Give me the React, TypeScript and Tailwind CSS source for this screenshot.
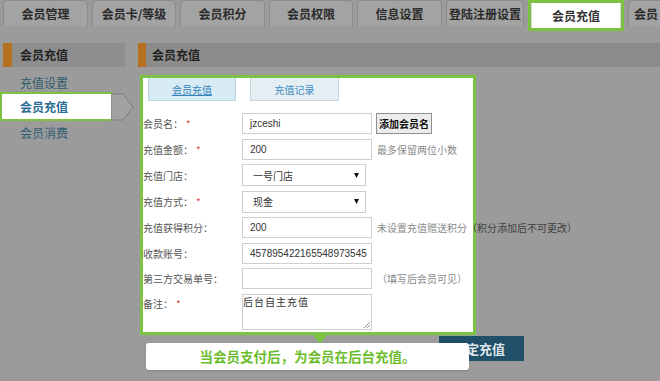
import React from "react";

const cjk = "font-['Noto_Sans_CJK_SC','Noto_Sans',sans-serif]";

function Tab({ label, w }: { label: string; w: string }) {
  return (
    <div
      className={`${w} h-[26px] shrink-0 rounded-t-[4px] border border-b-0 border-[#8c8c8c] bg-[#a3a3a3] flex items-center justify-center text-[12px] font-bold text-[#2a2a2a]`}
    >
      {label}
    </div>
  );
}

function Label({ text, req }: { text: string; req?: boolean }) {
  return (
    <div className="w-[99px] shrink-0 text-[10px] text-[#555] whitespace-nowrap">
      {text}
      {req && <span className="ml-[3px] text-[#e0463f]">*</span>}
    </div>
  );
}

function Input({ value, w = "w-[130px]" }: { value?: string; w?: string }) {
  return (
    <div
      className={`${w} h-[21px] shrink-0 border border-[#cfcfcf] bg-white pl-[7px] flex items-center text-[10px] text-[#333] font-['Liberation_Sans',sans-serif]`}
    >
      {value}
    </div>
  );
}

function Select({ value }: { value: string }) {
  return (
    <div className="w-[124px] h-[22px] shrink-0 border border-[#cfcfcf] bg-white pl-[10px] pr-[6px] flex items-center justify-between text-[10px] text-[#333]">
      <span>{value}</span>
      <svg width="5" height="5" viewBox="0 0 5 5">
        <polygon points="0,0 5,0 2.5,5" fill="#111" />
      </svg>
    </div>
  );
}

export default function App() {
  return (
    <div className={`relative w-[660px] h-[381px] overflow-hidden bg-[#9b9b9b] ${cjk}`}>
      {/* top tabs */}
      <div className="flex items-start h-[31px] pl-[3px] gap-[4px]">
        <Tab label="会员管理" w="w-[85px]" />
        <Tab label="会员卡/等级" w="w-[84px]" />
        <Tab label="会员积分" w="w-[85px]" />
        <Tab label="会员权限" w="w-[84px]" />
        <Tab label="信息设置" w="w-[85px]" />
        <Tab label="登陆注册设置" w="w-[78px]" />
        <div className="w-[96px] h-[31px] shrink-0 border-[3px] border-[#7dc243] bg-white flex items-center justify-center text-[12px] font-bold text-[#333]">
          <div className="w-full h-full border-x border-[#d8d8d8] flex items-center justify-center">会员充值</div>
        </div>
        <div className="w-[33px] h-[26px] shrink-0 rounded-tl-[4px] border border-b-0 border-r-0 border-[#8c8c8c] bg-[#a3a3a3] flex items-center pl-[5px] text-[12px] font-bold text-[#2a2a2a] whitespace-nowrap">
          会员
        </div>
      </div>

      {/* body */}
      <div className="flex mt-[12px]">
        {/* sidebar */}
        <div className="w-[138px] shrink-0">
          <div className="flex h-[24px] pl-[3px]">
            <div className="w-[9px] bg-[#b5711d]" />
            <div className="w-[113px] bg-[#8e8e8e] flex items-center pl-[8px] text-[12px] font-bold text-[#222]">
              会员充值
            </div>
          </div>
          <div className="mt-[6px] h-[19px] flex items-center pl-[20px] text-[12px] text-[#2f5e6f]">
            充值设置
          </div>
          <div className="relative h-[29px]">
            <div className="w-[113px] h-[29px] border-2 border-[#7dc243] bg-white flex items-center pl-[18px] text-[12px] font-bold text-[#2b6d95]">
              会员充值
            </div>
            <svg className="absolute left-[111px] top-[1px]" width="24" height="28" viewBox="0 0 24 28">
              <polygon points="0,1 12,1 22,14 12,27 0,27" fill="#a2a2a2" stroke="#7f7f7f" strokeWidth="1" />
            </svg>
          </div>
          <div className="h-[24px] flex items-center pl-[20px] text-[12px] text-[#2f5e6f]">会员消费</div>
        </div>

        {/* main */}
        <div className="flex-1 min-w-0">
          <div className="flex h-[24px]">
            <div className="w-[8px] bg-[#b5711d]" />
            <div className="flex-1 bg-[#8c8c8c] flex items-center pl-[6px] text-[12px] font-bold text-[#222]">
              会员充值
            </div>
          </div>

          <div className="relative mt-[8px] ml-[2px] w-[336px] h-[260px] border-[3px] border-[#7dc243] bg-white">
            {/* panel tabs */}
            <div className="flex pl-[5px] gap-[14px]">
              <div className="w-[88px] h-[23px] bg-[#d6ebf4] border border-t-0 border-[#b9d3df] flex items-center justify-center text-[10px] text-[#3683ba] underline">
                会员充值
              </div>
              <div className="w-[89px] h-[23px] bg-[#e4eef3] border border-t-0 border-[#c5d6de] flex items-center justify-center text-[10px] text-[#3f8cc0]">
                充值记录
              </div>
            </div>

            {/* form */}
            <div className="mt-[12px] flex flex-col gap-[4.5px]">
              <div className="flex items-center">
                <Label text="会员名：" req />
                <Input value="jzceshi" />
                <div className="ml-[4px] h-[21px] px-[2px] border border-[#8f8f8f] bg-[#ececec] flex items-center text-[10px] font-bold text-[#111] whitespace-nowrap">
                  添加会员名
                </div>
              </div>
              <div className="flex items-center">
                <Label text="充值金额：" req />
                <Input value="200" />
                <span className="ml-[5px] text-[10px] text-[#8a8a8a] whitespace-nowrap">最多保留两位小数</span>
              </div>
              <div className="flex items-center">
                <Label text="充值门店：" />
                <Select value="一号门店" />
              </div>
              <div className="flex items-center">
                <Label text="充值方式：" req />
                <Select value="现金" />
              </div>
              <div className="flex items-center">
                <Label text="充值获得积分：" />
                <Input value="200" />
                <span className="ml-[5px] text-[10px] whitespace-nowrap">
                  <span className="text-[#8a8a8a]">未设置充值赠送积分</span>
                  <span className="text-[#3f3f3f]">（积分添加后不可更改）</span>
                </span>
              </div>
              <div className="flex items-center">
                <Label text="收款账号：" />
                <Input value="457895422165548973545" />
              </div>
              <div className="flex items-center">
                <Label text="第三方交易单号：" />
                <Input />
                <span className="ml-[5px] text-[10px] text-[#8a8a8a] whitespace-nowrap">（填写后会员可见）</span>
              </div>
              <div className="flex items-start">
                <div className="pt-[2px]">
                  <Label text="备注：" req />
                </div>
                <div className="relative w-[130px] h-[36px] border border-[#cfcfcf] bg-white text-[10px] tracking-[1px] text-[#333] leading-[13px]">
                  后台自主充值
                  <svg className="absolute right-[1px] bottom-[1px]" width="6" height="6" viewBox="0 0 6 6">
                    <path d="M6 0 L0 6 M6 3 L3 6" stroke="#999" strokeWidth="1" />
                  </svg>
                </div>
              </div>
            </div>

            {/* pointer */}
            <svg className="absolute left-[170px] top-[257px]" width="14" height="9" viewBox="0 0 14 9">
              <polygon points="0,0 14,0 7,9" fill="#7dc243" />
            </svg>
          </div>

          <div className="mt-[1px] ml-[301px] w-[85px] h-[25px] bg-[#1f4f69] flex items-center pl-[14px] text-[13px] font-bold text-[#dfe6ea] font-['Noto_Sans_CJK_SC',serif]">
            确定充值
          </div>
        </div>
      </div>

      {/* tooltip */}
      <div className="absolute left-[146px] top-[343px] w-[323px] h-[27px] rounded-[3px] bg-white shadow-[0_1px_2px_rgba(0,0,0,0.15)] flex items-center justify-center text-[13.5px] font-bold text-[#6cbd2c]">
        当会员支付后，为会员在后台充值。
      </div>
    </div>
  );
}
